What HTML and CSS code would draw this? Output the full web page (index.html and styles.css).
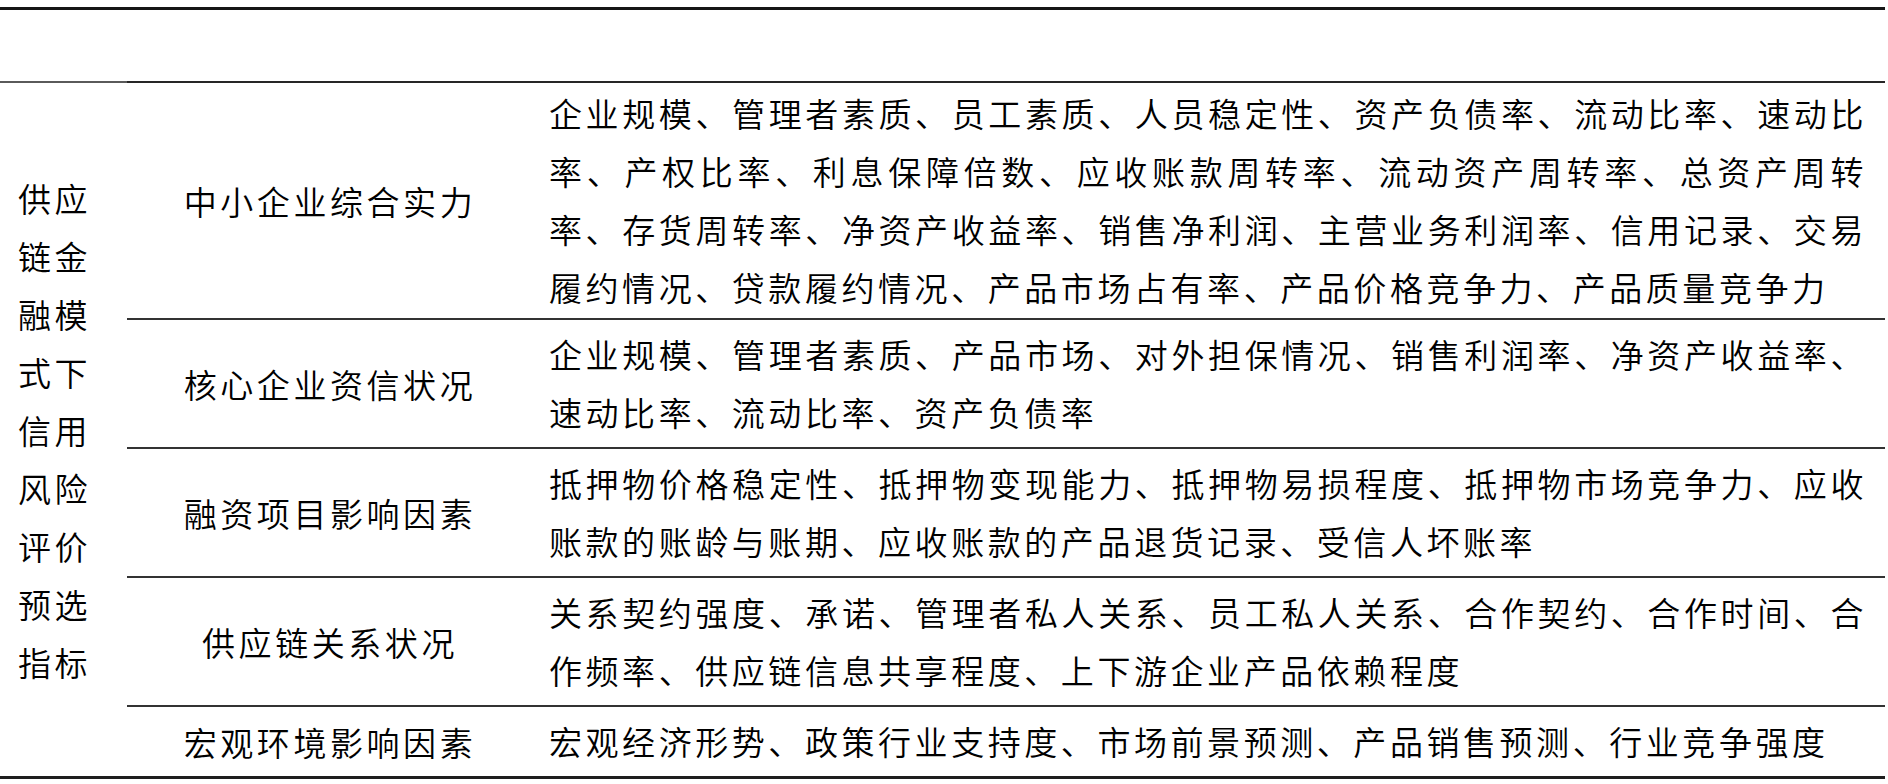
FILE: index.html
```html
<!DOCTYPE html>
<html lang="zh-CN">
<head>
<meta charset="utf-8">
<title>供应链金融模式下信用风险评价预选指标</title>
<link rel="stylesheet" href="styles.css">
</head>
<body>
<table class="indicators">
  <thead>
    <tr class="head">
      <th class="h-cat"></th>
      <th class="h-dim"></th>
      <th class="h-items"></th>
    </tr>
  </thead>
  <tbody>
    <tr class="r1">
      <td class="cat" rowspan="5">供应<br>链金<br>融模<br>式下<br>信用<br>风险<br>评价<br>预选<br>指标</td>
      <td class="dim">中小企业综合实力</td>
      <td class="items">企业规模、管理者素质、员工素质、人员稳定性、资产负债率、流动比率、速动比率、产权比率、利息保障倍数、应收账款周转率、流动资产周转率、总资产周转率、存货周转率、净资产收益率、销售净利润、主营业务利润率、信用记录、交易履约情况、贷款履约情况、产品市场占有率、产品价格竞争力、产品质量竞争力</td>
    </tr>
    <tr class="r2">
      <td class="dim">核心企业资信状况</td>
      <td class="items">企业规模、管理者素质、产品市场、对外担保情况、销售利润率、净资产收益率、速动比率、流动比率、资产负债率</td>
    </tr>
    <tr class="r3">
      <td class="dim">融资项目影响因素</td>
      <td class="items">抵押物价格稳定性、抵押物变现能力、抵押物易损程度、抵押物市场竞争力、应收账款的账龄与账期、应收账款的产品退货记录、受信人坏账率</td>
    </tr>
    <tr class="r4">
      <td class="dim">供应链关系状况</td>
      <td class="items">关系契约强度、承诺、管理者私人关系、员工私人关系、合作契约、合作时间、合作频率、供应链信息共享程度、上下游企业产品依赖程度</td>
    </tr>
    <tr class="r5">
      <td class="dim last">宏观环境影响因素</td>
      <td class="items last">宏观经济形势、政策行业支持度、市场前景预测、产品销售预测、行业竞争强度</td>
    </tr>
  </tbody>
</table>
</body>
</html>
```

FILE: styles.css
```css
html, body {
  margin: 0;
  padding: 0;
  background: #ffffff;
}

body {
  padding-top: 7px;
  font-family: "Noto Sans CJK SC", "Noto Sans CJK JP", sans-serif;
  color: #000000;
}

.indicators {
  width: 1885px;
  border-collapse: collapse;
  table-layout: fixed;
  border-top: 3px solid #161616;
  border-bottom: 3px solid #1e1e1e;
  font-size: 33px;
  font-weight: 350;
  letter-spacing: 3.56px;
  line-height: 58px;
}

.head th {
  height: 71px;
  padding: 0;
  border-bottom: 2px solid #262626;
}

.head .h-cat {
  width: 127px;
  border-bottom-color: #5a5a5a;
}

.head .h-dim {
  width: 403px;
}

.cat {
  padding: 0 0 0 18px;
  vertical-align: middle;
  text-align: left;
  white-space: nowrap;
}

.dim {
  padding: 0 0 0 3px;
  text-align: center;
  vertical-align: middle;
  white-space: nowrap;
  border-bottom: 2px solid #333333;
}

.items {
  padding: 5px 18px 6px 19px;
  text-align: justify;
  vertical-align: middle;
  border-bottom: 2px solid #333333;
}

.r1 .items {
  padding-top: 1px;
  padding-bottom: 2px;
}

.last {
  border-bottom: none;
}
```
